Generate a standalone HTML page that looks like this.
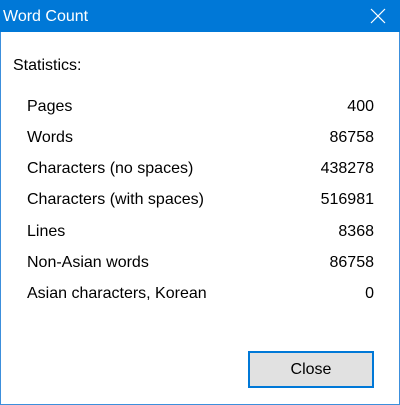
<!DOCTYPE html>
<html><head><style>
*{margin:0;padding:0;box-sizing:border-box}
body{width:400px;height:405px;background:#fff;font-family:"Liberation Sans",sans-serif;color:#000;position:relative;overflow:hidden}
.win{position:absolute;left:0;top:0;width:400px;height:405px;border:1px solid #3c8fdc;border-top:none}
.title{position:absolute;left:0;top:0;width:400px;height:32px;background:#0078d7;color:#fff;font-size:16px;line-height:33px;padding-left:3px}
.x{position:absolute;right:14px;top:8px;width:16px;height:16px}
.lbl{position:absolute;font-size:16px;line-height:18px}
.row{position:absolute;left:27px;width:347px;font-size:16px;line-height:18px}
.row span{position:absolute;right:0}
.btn{position:absolute;left:248px;top:351px;width:126px;height:37px;background:#e1e1e1;border:2px solid #0078d7;font-size:16px;text-align:center;line-height:34px}
</style></head><body>
<div class="win"></div>
<div class="title">Word Count
<svg class="x" viewBox="0 0 16 16"><path d="M1 1L15 15M15 1L1 15" stroke="#fff" stroke-width="1.2"/></svg></div>
<div class="lbl" style="left:13px;top:57px">Statistics:</div>
<div class="row" style="top:98px">Pages<span>400</span></div>
<div class="row" style="top:129px">Words<span>86758</span></div>
<div class="row" style="top:160px">Characters (no spaces)<span>438278</span></div>
<div class="row" style="top:191px">Characters (with spaces)<span>516981</span></div>
<div class="row" style="top:223px">Lines<span>8368</span></div>
<div class="row" style="top:254px">Non-Asian words<span>86758</span></div>
<div class="row" style="top:285px">Asian characters, Korean<span>0</span></div>
<div class="btn">Close</div>
</body></html>
